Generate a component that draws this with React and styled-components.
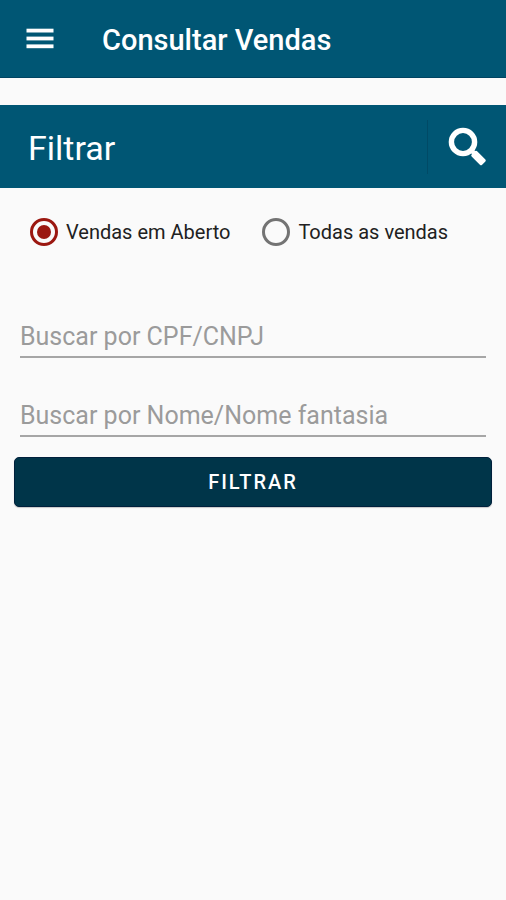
import React, { useState } from 'react'
import styled, { createGlobalStyle } from 'styled-components'

const GlobalStyle = createGlobalStyle`
  * {
    box-sizing: border-box;
  }
  body {
    margin: 0;
    background-color: #fafafa;
    font-family: Roboto, 'Liberation Sans', sans-serif;
  }
`;
const Container = styled.div`
  width: 100%;
  color: #212121;
`;
const TopBar = styled.header`
  display: flex;
  align-items: center;
  height: 78px;
  padding: 0 20px;
  background-color: #005674;
  border-bottom: 1px solid #004462;
`;
const IconButton = styled.button`
  display: flex;
  align-items: center;
  justify-content: center;
  width: 40px;
  height: 40px;
  padding: 0;
  border: none;
  background: none;
  color: #fff;
  cursor: pointer;
`;
const Title = styled.h1`
  margin: 2px 0 0 42px;
  font-size: 29px;
  line-height: 32px;
  font-weight: 500;
  color: #fff;
`;
const FilterBar = styled.section`
  display: flex;
  align-items: center;
  justify-content: space-between;
  height: 83px;
  margin-top: 27px;
  padding: 0 18px 0 28px;
  background-color: #005674;
`;
const FilterTitle = styled.h2`
  margin: 2px 0 0;
  font-size: 34px;
  line-height: 40px;
  font-weight: 400;
  color: #fff;
`;
const SearchArea = styled.div`
  display: flex;
  align-items: center;
  height: 54px;
  padding-left: 20px;
  border-left: 1px solid #004a66;
`;
const Form = styled.form`
  display: flex;
  flex-direction: column;
  padding: 30px 14px;
`;
const RadioGroup = styled.div`
  display: flex;
  flex-wrap: wrap;
  gap: 16px 32px;
  padding-left: 16px;
  margin-bottom: 68px;
`;
const RadioLabel = styled.label`
  display: flex;
  align-items: center;
  gap: 8px;
  font-size: 20px;
  line-height: 28px;
  cursor: pointer;
`;
const Radio = styled.input`
  appearance: none;
  display: grid;
  place-content: center;
  width: 28px;
  height: 28px;
  margin: 0;
  border: 3px solid #737373;
  border-radius: 50%;
  cursor: pointer;

  &:checked {
    border-color: #9b1710;
  }
  &:checked::before {
    content: '';
    width: 14px;
    height: 14px;
    border-radius: 50%;
    background-color: #9b1710;
  }
`;
const Field = styled.input`
  display: block;
  height: 44px;
  margin: 0 6px 35px;
  padding: 2px 0 0;
  border: none;
  border-bottom: 2px solid #a6a6a6;
  border-radius: 0;
  outline: none;
  background: none;
  font-family: inherit;
  font-size: 25px;
  color: #212121;

  &::placeholder {
    color: #9b9b9b;
    opacity: 1;
  }
  &:last-of-type {
    margin-bottom: 20px;
  }
`;
const SubmitButton = styled.button`
  height: 50px;
  border: 1px solid #00203c;
  border-radius: 5px;
  background-color: #003549;
  box-shadow: 0 1px 1px rgba(0, 0, 0, 0.2);
  font-family: inherit;
  font-size: 20px;
  font-weight: 500;
  letter-spacing: 2px;
  text-transform: uppercase;
  color: #fff;
  cursor: pointer;
`;

const MenuIcon = () => (
  <svg width="28" height="22" viewBox="0 0 28 22" fill="currentColor" aria-hidden="true">
    <rect x="0.5" y="0.7" width="27" height="3.8" />
    <rect x="0.5" y="8.6" width="27" height="3.8" />
    <rect x="0.5" y="16.4" width="27" height="3.8" />
  </svg>
);
const SearchIcon = () => (
  <svg width="40" height="40" viewBox="0 0 40 40" fill="none" stroke="currentColor" aria-hidden="true">
    <circle cx="15" cy="15" r="11.6" strokeWidth="5.4" />
    <path d="M22 22 L28 28" strokeWidth="4.5" />
    <path d="M28 25 L36.5 33.5 L33 37 L24.5 28.5 Z" strokeWidth="2.5" strokeLinejoin="round" fill="currentColor" />
  </svg>
);

const options = [
  { value: 'aberto', label: 'Vendas em Aberto' },
  { value: 'todas', label: 'Todas as vendas' },
]

const App = () => {
  const [option, setOption] = useState('aberto');

  return (
    <Container>
      <GlobalStyle />
      <TopBar>
        <IconButton type="button" aria-label="Menu">
          <MenuIcon />
        </IconButton>
        <Title>Consultar Vendas</Title>
      </TopBar>
      <FilterBar>
        <FilterTitle>Filtrar</FilterTitle>
        <SearchArea>
          <IconButton type="button" aria-label="Buscar">
            <SearchIcon />
          </IconButton>
        </SearchArea>
      </FilterBar>
      <Form onSubmit={(e) => e.preventDefault()}>
        <RadioGroup>
          {options.map((item) => {
            return (
              <RadioLabel key={item.value}>
                <Radio
                  type="radio"
                  name="vendas"
                  value={item.value}
                  checked={option === item.value}
                  onChange={() => setOption(item.value)}
                />
                {item.label}
              </RadioLabel>
            );
          })}
        </RadioGroup>
        <Field type="text" aria-label="Buscar por CPF/CNPJ" placeholder="Buscar por CPF/CNPJ" />
        <Field type="text" aria-label="Buscar por Nome/Nome fantasia" placeholder="Buscar por Nome/Nome fantasia" />
        <SubmitButton type="submit">Filtrar</SubmitButton>
      </Form>
    </Container>
  );
};


export default App
